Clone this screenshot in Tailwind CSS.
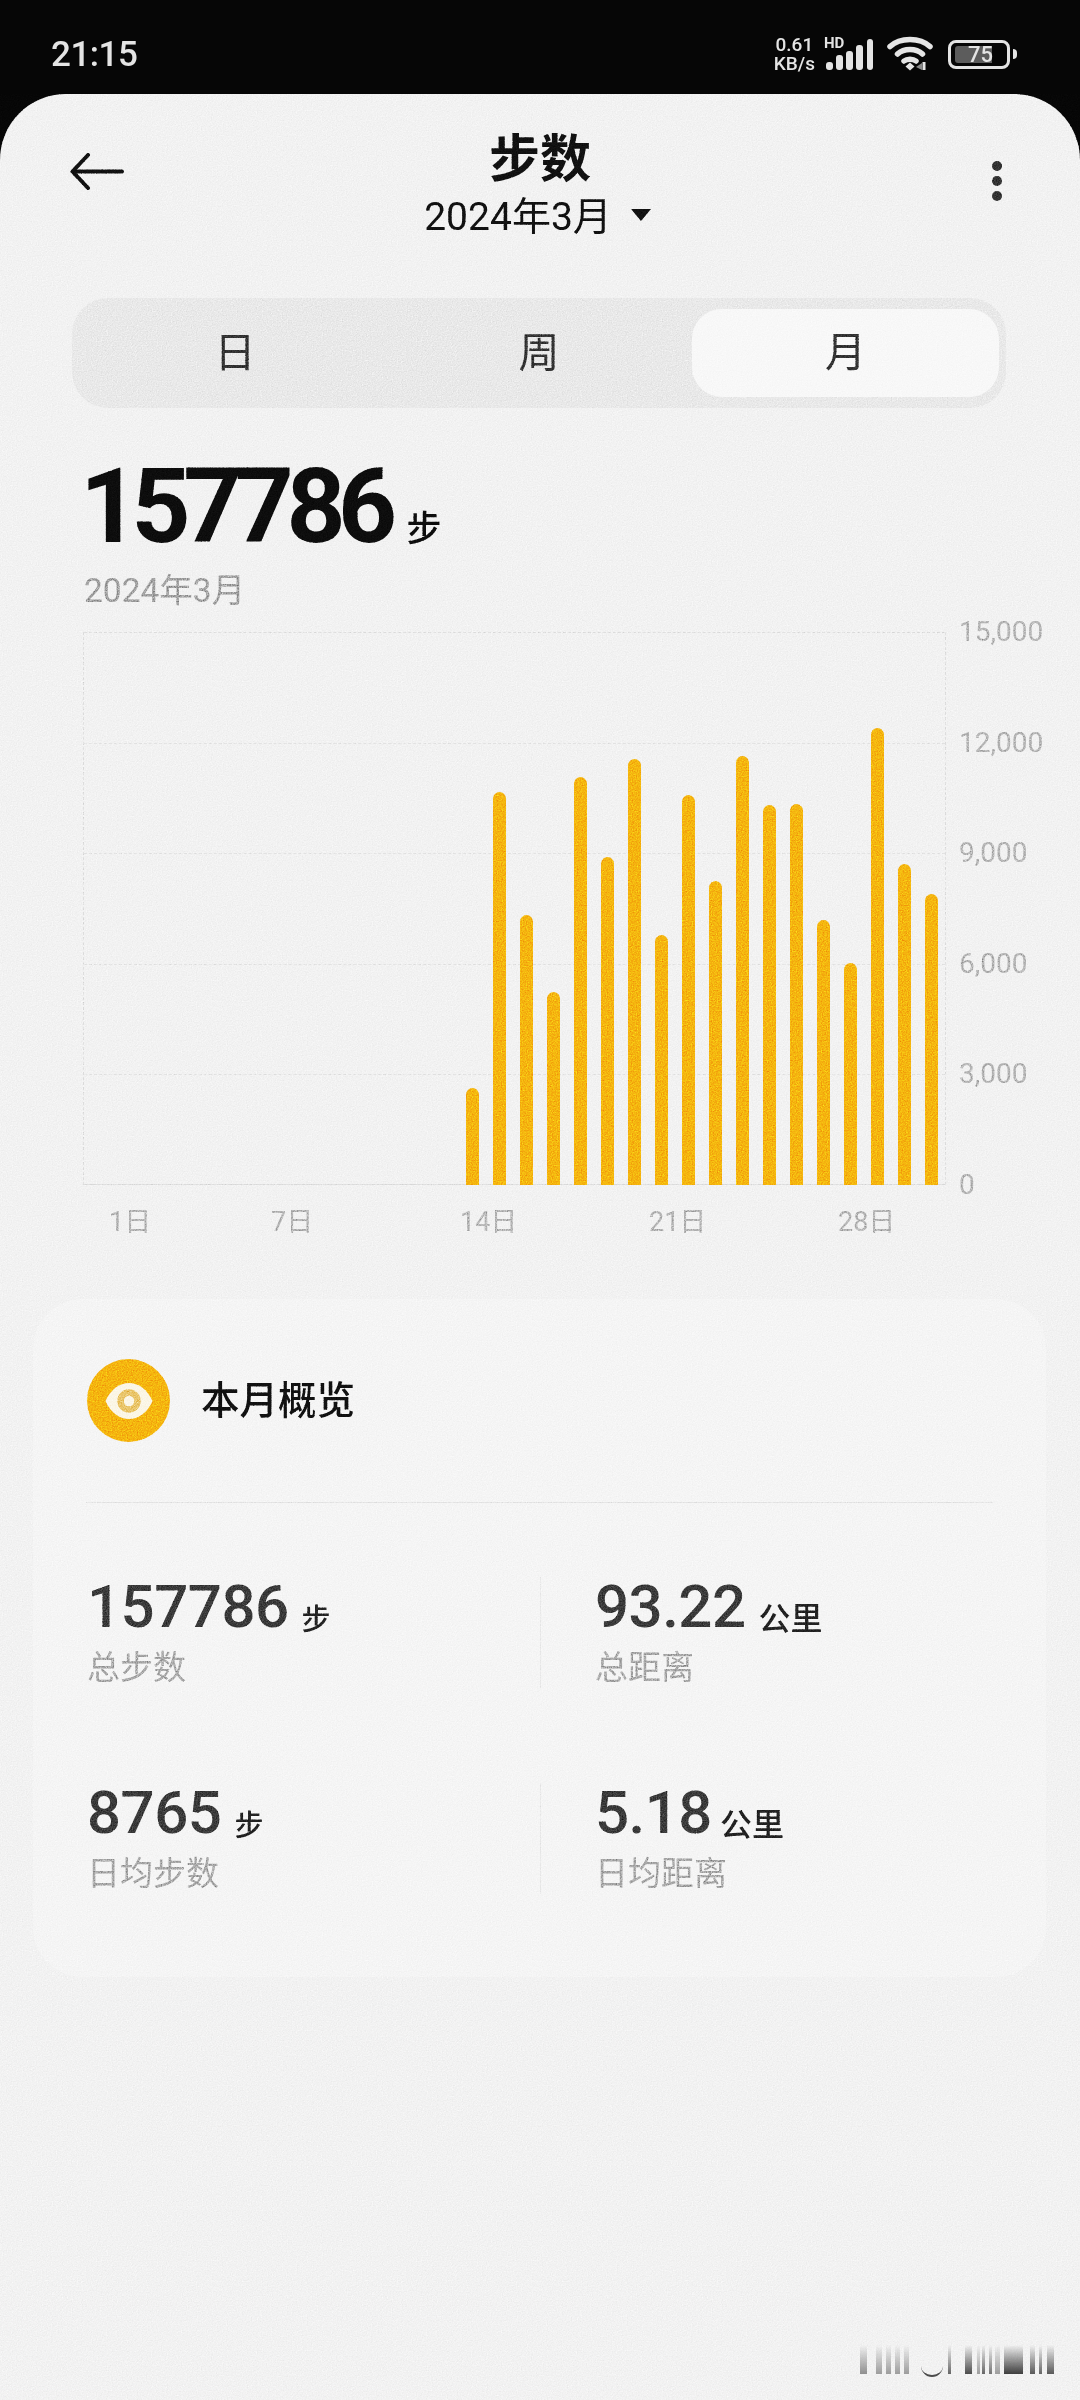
<!DOCTYPE html>
<html lang="zh-CN">
  <head>
    <meta charset="UTF-8" />
    <meta name="viewport" content="width=device-width, initial-scale=1" />
    <title>步数</title>
    <script src="https://cdn.jsdelivr.net/npm/@tailwindcss/browser@4"></script>
  </head>
  <body class="bg-[#060606] font-['Roboto','Noto_Sans_CJK_SC',sans-serif]">
    <div class="relative w-[1080px] h-[2400px] flex flex-col overflow-hidden">
      <!-- status bar -->
      <div class="h-[94px] shrink-0 flex items-center pt-[20px] pl-[51px] pr-[63px] text-[#e4e4e4]">
        <span class="text-[35px] leading-[40px] font-medium tracking-[-0.5px] -mt-[4px]">21:15</span>
        <div class="ml-auto flex items-center -mt-[6px]">
          <div class="flex flex-col items-center text-[19px] leading-[19px] font-medium">
            <span>0.61</span>
            <span>KB/s</span>
          </div>
          <div class="relative ml-[9px] w-[50px] h-[34px]">
            <span class="absolute left-0 -top-[1px] text-[15px] leading-[15px] font-bold">HD</span>
            <svg class="absolute left-[2px] top-0" width="48" height="34" viewBox="0 0 48 34" fill="#e4e4e4">
              <rect x="0" y="25" width="7" height="8" rx="3" />
              <rect x="10" y="18" width="7" height="15" rx="3" />
              <rect x="20" y="14" width="7" height="19" rx="3" />
              <rect x="30" y="8" width="7" height="25" rx="3" />
              <rect x="41" y="2" width="6" height="31" rx="3" />
            </svg>
          </div>
          <svg class="ml-[13px]" width="48" height="36" viewBox="0 0 48 36" fill="none" stroke="#e4e4e4" stroke-width="5.5" stroke-linecap="round">
            <path d="M3 10.5C13 1 33 1 43 10.5" />
            <path d="M10.5 18C17 12 29 12 35.5 18" />
            <path d="M17 25C20 22.5 26 22.5 29 25" />
            <path d="M18.5 30.5L23 26.5L27.5 30.5L23 34.5Z" fill="#e4e4e4" stroke="none" />
            <path d="M37 26V34" stroke-width="3" stroke-linecap="butt" />
            <path d="M35 34V27L29 31Z" fill="#8a8a8a" stroke="none" />
          </svg>
          <div class="ml-[13px] flex items-center">
            <div class="relative w-[62px] h-[29px] rounded-[8px] border-[3px] border-[#e4e4e4] flex items-center">
              <div class="ml-[4px] w-[37px] h-[17px] bg-[#5c5c5c] rounded-l-[3px]"></div>
              <span class="absolute left-[17px] top-0 text-[22px] leading-[23px] font-medium">75</span>
            </div>
            <div class="ml-[3px] w-[4px] h-[10px] bg-[#e4e4e4] rounded-r-full"></div>
          </div>
        </div>
      </div>

      <!-- main panel -->
      <div class="flex-1 bg-[#f2f2f2] rounded-t-[66px] flex flex-col">
        <div class="grid grid-cols-[1fr_auto_1fr] pt-[36px]">
          <div class="pl-[70px] pt-[23px]">
            <svg width="54" height="37" viewBox="0 0 54 37" fill="none" stroke="#111" stroke-width="4" stroke-linecap="round" stroke-linejoin="round">
              <path d="M52 18.5H3" />
              <path d="M18 2L2.5 18.5L18 35" />
            </svg>
          </div>
          <div class="flex flex-col items-center">
            <h1 class="text-[51px] leading-[60px] font-semibold text-[#111]">步数</h1>
            <div class="mt-[5px] flex items-center text-[39px] leading-[44px] text-[#111] -ml-[5px]">
              <span>2024年3月</span>
              <span class="ml-[19px] -mt-[4px] w-0 h-0 border-x-[10px] border-x-transparent border-t-[12px] border-t-[#111]"></span>
            </div>
          </div>
          <div class="flex flex-col items-end gap-[5px] pr-[78px] pt-[31px]">
            <span class="w-[10px] h-[10px] rounded-full bg-[#333]"></span>
            <span class="w-[10px] h-[10px] rounded-full bg-[#333]"></span>
            <span class="w-[10px] h-[10px] rounded-full bg-[#333]"></span>
          </div>
        </div>

        <!-- day / week / month -->
        <div class="mt-[59px] ml-[72px] w-[934px] h-[110px] rounded-[36px] bg-[#e9e9e9] flex items-center text-[41px] text-[#333]">
          <div class="w-[326px] pt-[2px] text-center">日</div>
          <div class="w-[282px] pt-[2px] text-center">周</div>
          <div class="ml-[12px] w-[307px] h-[88px] pt-[2px] rounded-[30px] bg-[#f8f8f8] flex items-center justify-center">月</div>
        </div>

        <!-- month total -->
        <div class="mt-[49px] pl-[80px] flex items-end text-[#0d0d0d]">
          <span class="text-[103px] leading-[100px] font-bold tracking-[-7.5px]">157786</span>
          <span class="ml-[17px] mb-[7px] text-[35px] leading-[40px] font-medium">步</span>
        </div>
        <div class="mt-[14px] pl-[84px] text-[33.5px] leading-[40px] text-[#a0a0a0]">2024年3月</div>

        <!-- chart -->
        <div class="mt-[21px] flex">
          <div class="relative ml-[83px] w-[863px] h-[553px] border-l border-r border-dashed border-[#dedede]">
            <div class="h-full flex flex-col">
              <div class="flex-1 border-t border-dashed border-[#dedede]"></div>
              <div class="flex-1 border-t border-dashed border-[#e2e2e2]"></div>
              <div class="flex-1 border-t border-dashed border-[#e2e2e2]"></div>
              <div class="flex-1 border-t border-dashed border-[#e2e2e2]"></div>
              <div class="flex-1 border-t border-dashed border-[#e2e2e2]"></div>
            </div>
            <div class="absolute inset-x-0 bottom-0 border-t border-[#dedede]"></div>
            <div class="absolute inset-0 flex items-end justify-end gap-[13.5px] pr-[7px]">
              <div class="w-[13.5px] h-[97px] rounded-t-full bg-[#f5b50f]"></div>
              <div class="w-[13.5px] h-[393px] rounded-t-full bg-[#f5b50f]"></div>
              <div class="w-[13.5px] h-[270px] rounded-t-full bg-[#f5b50f]"></div>
              <div class="w-[13.5px] h-[193px] rounded-t-full bg-[#f5b50f]"></div>
              <div class="w-[13.5px] h-[408px] rounded-t-full bg-[#f5b50f]"></div>
              <div class="w-[13.5px] h-[328px] rounded-t-full bg-[#f5b50f]"></div>
              <div class="w-[13.5px] h-[426px] rounded-t-full bg-[#f5b50f]"></div>
              <div class="w-[13.5px] h-[250px] rounded-t-full bg-[#f5b50f]"></div>
              <div class="w-[13.5px] h-[390px] rounded-t-full bg-[#f5b50f]"></div>
              <div class="w-[13.5px] h-[304px] rounded-t-full bg-[#f5b50f]"></div>
              <div class="w-[13.5px] h-[429px] rounded-t-full bg-[#f5b50f]"></div>
              <div class="w-[13.5px] h-[380px] rounded-t-full bg-[#f5b50f]"></div>
              <div class="w-[13.5px] h-[381px] rounded-t-full bg-[#f5b50f]"></div>
              <div class="w-[13.5px] h-[265px] rounded-t-full bg-[#f5b50f]"></div>
              <div class="w-[13.5px] h-[222px] rounded-t-full bg-[#f5b50f]"></div>
              <div class="w-[13.5px] h-[457px] rounded-t-full bg-[#f5b50f]"></div>
              <div class="w-[13.5px] h-[321px] rounded-t-full bg-[#f5b50f]"></div>
              <div class="w-[13.5px] h-[291px] rounded-t-full bg-[#f5b50f]"></div>
            </div>
          </div>
          <div class="ml-[13px] -my-[17px] flex flex-col justify-between text-[28px] leading-[34px] text-[#b4b4b4]">
            <span>15,000</span>
            <span>12,000</span>
            <span>9,000</span>
            <span>6,000</span>
            <span>3,000</span>
            <span>0</span>
          </div>
        </div>
        <div class="mt-[20px] pl-[109px] flex text-[27px] leading-[34px] text-[#b4b4b4]">
          <span class="w-[162px]">1日</span>
          <span class="w-[189px]">7日</span>
          <span class="w-[189px]">14日</span>
          <span class="w-[189px]">21日</span>
          <span>28日</span>
        </div>

        <!-- overview card -->
        <div class="mt-[60px] ml-[33px] w-[1013px] h-[678px] rounded-[50px] bg-[#f5f5f5] pt-[60px]">
          <div class="flex items-center pl-[54px]">
            <div class="w-[83px] h-[83px] rounded-full bg-[#f5b50f] flex items-center justify-center">
              <svg width="48" height="38" viewBox="0 0 48 38">
                <path d="M0.5 19C11 -5 37 -5 47.5 19C37 43 11 43 0.5 19Z" fill="#fbf6e6" />
                <circle cx="24" cy="19" r="8.5" fill="none" stroke="#eac66b" stroke-width="6.5" />
              </svg>
            </div>
            <span class="ml-[31px] text-[38.5px] leading-[44px] font-medium text-[#111]">本月概览</span>
          </div>
          <div class="mt-[60px] ml-[53px] w-[907px] border-t border-[#e4e4e4]"></div>
          <div class="mt-[74px] pl-[54px] grid grid-cols-[453px_1fr] gap-y-[95px]">
            <div>
              <div class="flex items-end h-[60px]">
                <span class="text-[60px] leading-[60px] font-medium tracking-[-0.5px] text-[#3a3a3a]">157786</span>
                <span class="ml-[13px] -mt-[1px] text-[29px] leading-[34px] font-medium text-[#222]">步</span>
              </div>
              <div class="mt-[11px] text-[33px] leading-[40px] text-[#a8a8a8]">总步数</div>
            </div>
            <div class="border-l border-[#e9e9e9] pl-[54px]">
              <div class="flex items-end h-[60px]">
                <span class="text-[60px] leading-[60px] font-medium tracking-[-0.5px] text-[#3a3a3a]">93.22</span>
                <span class="ml-[13px] mb-[1px] text-[32px] leading-[34px] font-medium text-[#222]">公里</span>
              </div>
              <div class="mt-[11px] text-[33px] leading-[40px] text-[#a8a8a8]">总距离</div>
            </div>
            <div>
              <div class="flex items-end h-[60px]">
                <span class="text-[60px] leading-[60px] font-medium tracking-[-0.5px] text-[#3a3a3a]">8765</span>
                <span class="ml-[13px] text-[29px] leading-[34px] font-medium text-[#222]">步</span>
              </div>
              <div class="mt-[11px] text-[33px] leading-[40px] text-[#a8a8a8]">日均步数</div>
            </div>
            <div class="border-l border-[#e9e9e9] pl-[54px]">
              <div class="flex items-end h-[60px]">
                <span class="text-[60px] leading-[60px] font-medium tracking-[-0.5px] text-[#3a3a3a]">5.18</span>
                <span class="ml-[8px] mb-[1px] text-[32px] leading-[34px] font-medium text-[#222]">公里</span>
              </div>
              <div class="mt-[11px] text-[33px] leading-[40px] text-[#a8a8a8]">日均距离</div>
            </div>
          </div>
        </div>
      </div>

      <!-- grain over the screenshot -->
      <svg class="absolute left-0 top-[94px] pointer-events-none mix-blend-overlay opacity-80" width="1080" height="2306">
        <filter id="grain" color-interpolation-filters="sRGB">
          <feTurbulence type="fractalNoise" baseFrequency="0.8" numOctaves="2" />
          <feColorMatrix type="matrix" values="0.6 0.6 0.6 0 -0.4  0.6 0.6 0.6 0 -0.4  0.6 0.6 0.6 0 -0.4  0 0 0 0 1" />
        </filter>
        <rect width="1080" height="2306" filter="url(#grain)" />
      </svg>

      <!-- smudged watermark, bottom right -->
      <div class="absolute left-[860px] top-[2345px] h-[29px] w-[206px] flex items-stretch opacity-80">
        <div class="w-[7px] bg-gradient-to-b from-transparent to-[#777]"></div>
        <div class="ml-[9px] w-[6px] bg-gradient-to-b from-transparent to-[#888]"></div>
        <div class="ml-[4px] w-[5px] bg-gradient-to-b from-transparent to-[#888]"></div>
        <div class="ml-[4px] w-[5px] bg-gradient-to-b from-transparent to-[#888]"></div>
        <div class="ml-[4px] w-[5px] bg-gradient-to-b from-transparent to-[#888]"></div>
        <div class="ml-[12px] w-[22px] h-[32px] border-b-2 border-[#222] rounded-b-full"></div>
        <div class="ml-[5px] w-[3px] bg-gradient-to-b from-transparent to-[#444]"></div>
        <div class="ml-[14px] w-[7px] bg-gradient-to-b from-transparent to-[#222]"></div>
        <div class="ml-[5px] w-[3px] bg-gradient-to-b from-transparent to-[#888]"></div>
        <div class="ml-[2px] w-[3px] bg-gradient-to-b from-transparent to-[#444]"></div>
        <div class="ml-[4px] w-[3px] bg-gradient-to-b from-transparent to-[#555]"></div>
        <div class="ml-[3px] w-[5px] bg-gradient-to-b from-transparent to-[#888]"></div>
        <div class="ml-[4px] w-[19px] bg-gradient-to-b from-transparent to-[#111]"></div>
        <div class="ml-[7px] w-[5px] bg-gradient-to-b from-transparent to-[#333]"></div>
        <div class="ml-[4px] w-[3px] bg-gradient-to-b from-transparent to-[#444]"></div>
        <div class="ml-[5px] w-[7px] bg-gradient-to-b from-transparent to-[#333]"></div>
      </div>
    </div>
  </body>
</html>
